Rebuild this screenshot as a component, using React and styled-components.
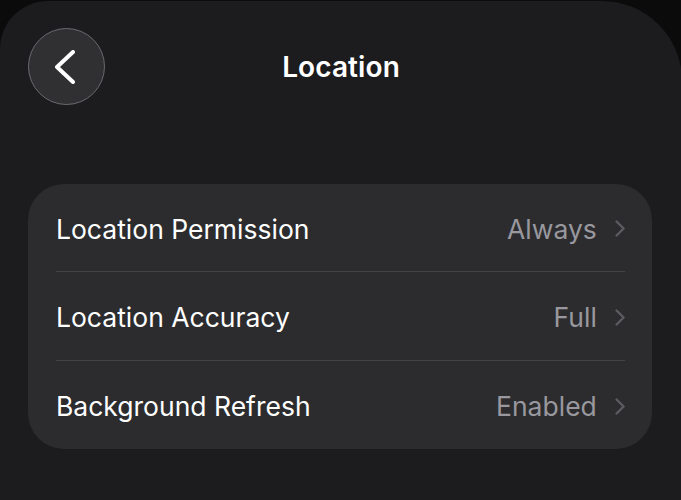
import React from "react";
import styled, { createGlobalStyle } from "styled-components";

const GlobalStyle = createGlobalStyle`
  html, body {
    margin: 0;
    padding: 0;
    background: #0b0b0c;
  }
  body {
    font-family: Inter, "Noto Sans", sans-serif;
    -webkit-font-smoothing: antialiased;
  }
`;

const Sheet = styled.div`
  box-sizing: border-box;
  width: 682px;
  height: 500px;
  margin-top: 1px;
  background: #1c1c1e;
  border-radius: 48px 80px 0 0;
  padding: 27px 28px 0 28px;
  overflow: hidden;
`;

const Header = styled.div`
  position: relative;
  display: flex;
  align-items: center;
  height: 77px;
`;

const BackButton = styled.button`
  box-sizing: border-box;
  width: 77px;
  height: 77px;
  border-radius: 50%;
  background: #303033;
  border: 1.5px solid #6b6b70;
  display: flex;
  align-items: center;
  justify-content: center;
  padding: 0 4px 0 0;
  cursor: pointer;
`;

const Title = styled.h1`
  position: absolute;
  left: 0;
  right: 0;
  margin: 0;
  text-align: center;
  pointer-events: none;
  color: #ffffff;
  font-size: 28px;
  font-weight: 600;
  letter-spacing: 0.1px;
`;

const Card = styled.div`
  margin-top: 79px;
  width: 624px;
  background: #2c2c2e;
  border-radius: 36px;
  padding: 0 27px 0 28px;
  box-sizing: border-box;
`;

const Row = styled.div`
  display: flex;
  align-items: center;
  height: ${(p) => (p.first ? "87px" : "89px")};
  padding-top: 2px;
  border-top: ${(p) => (p.first ? "none" : "1.5px solid #444447")};
  box-sizing: border-box;
`;

const Label = styled.span`
  flex: 1;
  color: #ffffff;
  font-size: 26.5px;
  font-weight: 400;
`;

const Value = styled.span`
  color: #98989e;
  font-size: 26.5px;
  font-weight: 400;
  margin-right: 18px;
`;

const Chevron = ({ size = 17, color = "#5b5b60", width = 2.4 }) => (
  <svg width={size * 0.6} height={size} viewBox="0 0 10 17" fill="none">
    <path
      d="M1.5 1.5 L8.5 8.5 L1.5 15.5"
      stroke={color}
      strokeWidth={width}
      strokeLinecap="round"
      strokeLinejoin="round"
    />
  </svg>
);

const BackIcon = () => (
  <svg width="22" height="34" viewBox="0 0 22 34" fill="none">
    <path
      d="M19 2 L3 17 L19 32"
      stroke="#ffffff"
      strokeWidth="4"
      strokeLinecap="round"
      strokeLinejoin="round"
    />
  </svg>
);

const settings = [
  { label: "Location Permission", value: "Always" },
  { label: "Location Accuracy", value: "Full" },
  { label: "Background Refresh", value: "Enabled" },
];

export default function App() {
  return (
    <>
      <GlobalStyle />
      <Sheet>
        <Header>
          <BackButton aria-label="Back">
            <BackIcon />
          </BackButton>
          <Title>Location</Title>
        </Header>
        <Card>
          {settings.map((s, i) => (
            <Row key={s.label} first={i === 0}>
              <Label>{s.label}</Label>
              <Value>{s.value}</Value>
              <Chevron />
            </Row>
          ))}
        </Card>
      </Sheet>
    </>
  );
}
